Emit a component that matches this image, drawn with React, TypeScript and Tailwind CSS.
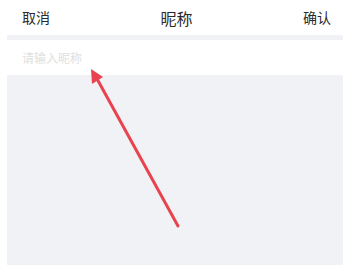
export default function App() {
  return (
    <div
      className="relative h-[266px] w-[343px] overflow-hidden bg-white text-[#2b2b2b]"
      style={{ fontFamily: '"Noto Sans CJK SC", "Noto Sans", sans-serif' }}
    >
      {/* header */}
      <div className="flex h-[35px] items-center justify-between pl-[22px] pr-[12px]">
        <span className="text-[14px]">取消</span>
        <span className="text-[16px]">昵称</span>
        <span className="text-[14px]">确认</span>
      </div>
      <div className="ml-[7px] h-[5px] bg-[#f1f2f6]" />

      {/* input */}
      <div className="flex h-[35px] items-center pl-[22px]">
        <input
          className="w-full bg-transparent text-[12px] outline-none placeholder:text-[#e0e0e0]"
          placeholder="请输入昵称"
        />
      </div>

      <div className="ml-[7px] h-[190px] bg-[#f1f2f6]" />

      {/* arrow annotation */}
      <svg
        className="absolute left-0 top-0"
        width="343"
        height="266"
        viewBox="0 0 343 266"
      >
        <line
          x1="178"
          y1="226"
          x2="96"
          y2="77"
          stroke="#e8434f"
          strokeWidth="3"
          strokeLinecap="round"
        />
        <polygon points="91,69 92,84 103,77" fill="#e8434f" />
      </svg>
    </div>
  );
}
